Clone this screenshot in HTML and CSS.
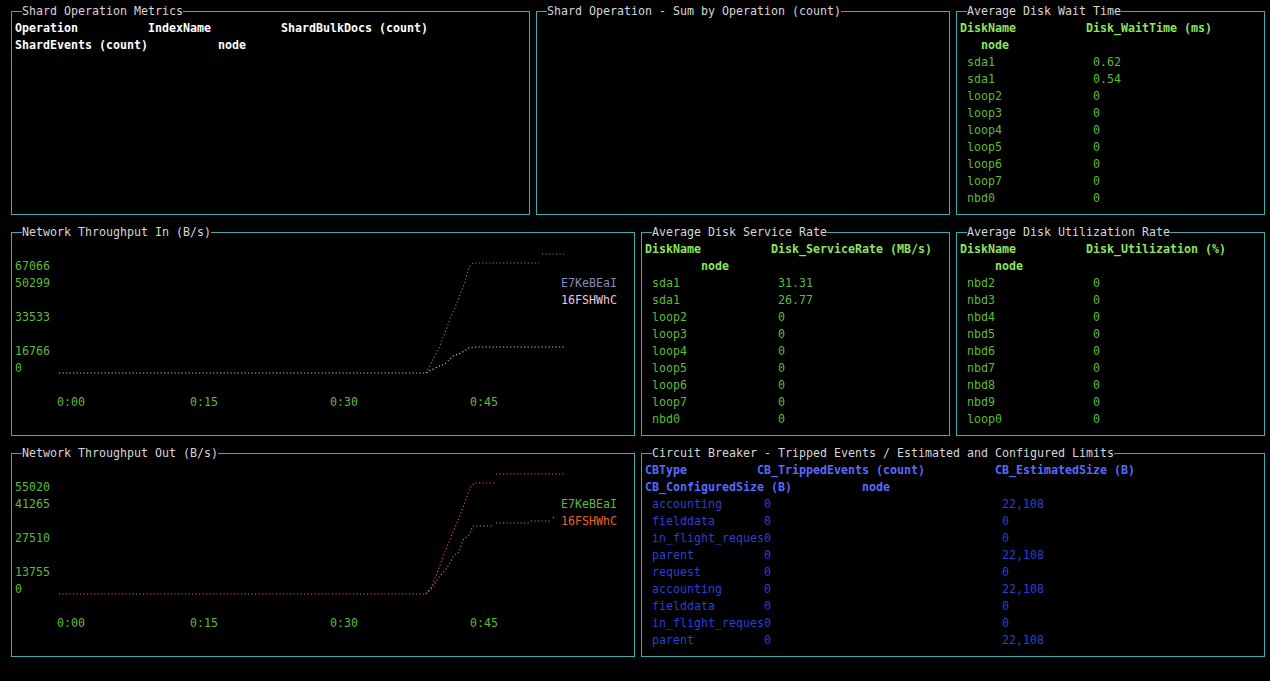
FILE: index.html
```html
<!DOCTYPE html>
<html>
<head>
<meta charset="utf-8">
<title>Cluster Dashboard</title>
<link rel="stylesheet" href="styles.css">
</head>
<body>
<main class="dash">
  <div class="row">
    <section class="box w519">
      <div class="title">Shard Operation Metrics</div>
      <div class="ln white bold"><span class="c19">Operation</span><span class="c19">IndexName</span><span>ShardBulkDocs (count)</span></div>
      <div class="ln white bold"><span class="c29">ShardEvents (count)</span><span>node</span></div>
    </section>
    <section class="box w414">
      <div class="title">Shard Operation - Sum by Operation (count)</div>
    </section>
    <section class="box w309">
      <div class="title">Average Disk Wait Time</div>
      <div class="ln ghead"><span class="c18">DiskName</span><span>Disk_WaitTime (ms)</span></div>
      <div class="ln ghead"><span class="c3"></span><span>node</span></div>
      <div class="ln gdata"><span class="name">sda1</span><span>0.62</span></div>
      <div class="ln gdata"><span class="name">sda1</span><span>0.54</span></div>
      <div class="ln gdata"><span class="name">loop2</span><span>0</span></div>
      <div class="ln gdata"><span class="name">loop3</span><span>0</span></div>
      <div class="ln gdata"><span class="name">loop4</span><span>0</span></div>
      <div class="ln gdata"><span class="name">loop5</span><span>0</span></div>
      <div class="ln gdata"><span class="name">loop6</span><span>0</span></div>
      <div class="ln gdata"><span class="name">loop7</span><span>0</span></div>
      <div class="ln gdata"><span class="name">nbd0</span><span>0</span></div>
    </section>
  </div>

  <div class="row">
    <section class="box w624 chart">
      <div class="title">Network Throughput In (B/s)</div>
      <div class="ln"></div>
      <div class="ln axis">67066</div>
      <div class="ln axis">50299</div>
      <div class="ln axis"></div>
      <div class="ln axis">33533</div>
      <div class="ln axis"></div>
      <div class="ln axis">16766</div>
      <div class="ln axis">0</div>
      <div class="ln"></div>
      <div class="ln axis"><span class="c6"></span><span class="c19">0:00</span><span class="c20">0:15</span><span class="c20">0:30</span><span>0:45</span></div>
      <div class="legend">
        <div class="ln lav">E7KeBEaI</div>
        <div class="ln pink">16FSHWhC</div>
      </div>
      <svg class="plot" width="624" height="204" viewBox="0 0 624 204">
        <polyline class="series lav-s" points="415,141 428,116 440,85 448,66 454,50 458,35 462,31 528,31"/>
        <polyline class="series lav-s" points="531,22 554,22"/>
        <polyline class="series pink-s" points="48,141 415,141 426,135 434,132 442,124 450,121 458,116 463,115 554,115"/>
      </svg>
    </section>
    <section class="box w309">
      <div class="title">Average Disk Service Rate</div>
      <div class="ln ghead"><span class="c18">DiskName</span><span>Disk_ServiceRate (MB/s)</span></div>
      <div class="ln ghead"><span class="c8"></span><span>node</span></div>
      <div class="ln gdata"><span class="name">sda1</span><span>31.31</span></div>
      <div class="ln gdata"><span class="name">sda1</span><span>26.77</span></div>
      <div class="ln gdata"><span class="name">loop2</span><span>0</span></div>
      <div class="ln gdata"><span class="name">loop3</span><span>0</span></div>
      <div class="ln gdata"><span class="name">loop4</span><span>0</span></div>
      <div class="ln gdata"><span class="name">loop5</span><span>0</span></div>
      <div class="ln gdata"><span class="name">loop6</span><span>0</span></div>
      <div class="ln gdata"><span class="name">loop7</span><span>0</span></div>
      <div class="ln gdata"><span class="name">nbd0</span><span>0</span></div>
    </section>
    <section class="box w309">
      <div class="title">Average Disk Utilization Rate</div>
      <div class="ln ghead"><span class="c18">DiskName</span><span>Disk_Utilization (%)</span></div>
      <div class="ln ghead"><span class="c5"></span><span>node</span></div>
      <div class="ln gdata"><span class="name">nbd2</span><span>0</span></div>
      <div class="ln gdata"><span class="name">nbd3</span><span>0</span></div>
      <div class="ln gdata"><span class="name">nbd4</span><span>0</span></div>
      <div class="ln gdata"><span class="name">nbd5</span><span>0</span></div>
      <div class="ln gdata"><span class="name">nbd6</span><span>0</span></div>
      <div class="ln gdata"><span class="name">nbd7</span><span>0</span></div>
      <div class="ln gdata"><span class="name">nbd8</span><span>0</span></div>
      <div class="ln gdata"><span class="name">nbd9</span><span>0</span></div>
      <div class="ln gdata"><span class="name">loop0</span><span>0</span></div>
    </section>
  </div>

  <div class="row">
    <section class="box w624 chart">
      <div class="title">Network Throughput Out (B/s)</div>
      <div class="ln"></div>
      <div class="ln axis">55020</div>
      <div class="ln axis">41265</div>
      <div class="ln axis"></div>
      <div class="ln axis">27510</div>
      <div class="ln axis"></div>
      <div class="ln axis">13755</div>
      <div class="ln axis">0</div>
      <div class="ln"></div>
      <div class="ln axis"><span class="c6"></span><span class="c19">0:00</span><span class="c20">0:15</span><span class="c20">0:30</span><span>0:45</span></div>
      <div class="legend">
        <div class="ln grn">E7KeBEaI</div>
        <div class="ln org">16FSHWhC</div>
      </div>
      <svg class="plot" width="624" height="204" viewBox="0 0 624 204">
        <polyline class="series grn-s" points="415,141 422,134 428,124 436,115 442,104 448,99 452,87 458,82 462,73 483,73"/>
        <polyline class="series grn-s" points="485,70 518,70"/>
        <polyline class="series grn-s" points="520,68 540,68"/>
        <polyline class="series grn-s" points="542,65 543,64"/>
        <polyline class="series org-s" points="48,141 415,141 421,133 426,120 432,104 440,84 448,65 454,49 459,35 463,30 484,30"/>
        <polyline class="series org-s" points="485,21 554,21"/>
      </svg>
    </section>
    <section class="box w624">
      <div class="title">Circuit Breaker - Tripped Events / Estimated and Configured Limits</div>
      <div class="ln bhead"><span class="c16">CBType</span><span class="c34">CB_TrippedEvents (count)</span><span>CB_EstimatedSize (B)</span></div>
      <div class="ln bhead"><span class="c31">CB_ConfiguredSize (B)</span><span>node</span></div>
      <div class="ln bdata"><span class="cbname">accounting</span><span class="c34">0</span><span>22,108</span></div>
      <div class="ln bdata"><span class="cbname">fielddata</span><span class="c34">0</span><span>0</span></div>
      <div class="ln bdata"><span class="cbname">in_flight_reques</span><span class="c34">0</span><span>0</span></div>
      <div class="ln bdata"><span class="cbname">parent</span><span class="c34">0</span><span>22,108</span></div>
      <div class="ln bdata"><span class="cbname">request</span><span class="c34">0</span><span>0</span></div>
      <div class="ln bdata"><span class="cbname">accounting</span><span class="c34">0</span><span>22,108</span></div>
      <div class="ln bdata"><span class="cbname">fielddata</span><span class="c34">0</span><span>0</span></div>
      <div class="ln bdata"><span class="cbname">in_flight_reques</span><span class="c34">0</span><span>0</span></div>
      <div class="ln bdata"><span class="cbname">parent</span><span class="c34">0</span><span>22,108</span></div>
    </section>
  </div>
</main>
</body>
</html>
```
FILE: styles.css
```css
html, body {
  margin: 0;
  padding: 0;
  background: #000;
}
body {
  width: 1270px;
  height: 681px;
  overflow: hidden;
  font-family: "DejaVu Sans Mono", "Liberation Mono", monospace;
  font-size: 11.63px;
  color: #d6d6d6;
}
.dash {
  display: flex;
  flex-direction: column;
  gap: 17px;
  padding: 11px 0 0 11px;
}
.row {
  display: flex;
  gap: 6px;
}
.box {
  position: relative;
  box-sizing: border-box;
  height: 204px;
  border: 1px solid #39adb0;
  padding: 0 3px;
}
.w519 { width: 519px; }
.w414 { width: 414px; }
.w309 { width: 309px; }
.w624 { width: 624px; }

.title {
  width: max-content;
  height: 17px;
  line-height: 17px;
  margin: -9px 0 0 1ch;
  background: #000;
  color: #d6d6d6;
  white-space: pre;
}
.ln {
  height: 17px;
  line-height: 17px;
  white-space: pre;
}
.ln span {
  display: inline-block;
  white-space: pre;
}
.c3 { width: 3ch; }
.c5 { width: 5ch; }
.c6 { width: 6ch; }
.c8 { width: 8ch; }
.c16 { width: 16ch; }
.c18 { width: 18ch; }
.c19 { width: 19ch; }
.c20 { width: 20ch; }
.c29 { width: 29ch; }
.c31 { width: 31ch; }
.c34 { width: 34ch; }

.bold { font-weight: bold; }
.white { color: #ffffff; }

.ghead { color: #8ee45c; font-weight: bold; }
.gdata { color: #5fba36; }
.gdata .name {
  box-sizing: border-box;
  width: 19ch;
  padding-left: 1ch;
}

.bhead { color: #5a6aff; font-weight: bold; }
.bdata { color: #2b3fd4; }
.bdata .cbname {
  box-sizing: border-box;
  width: 17ch;
  padding-left: 1ch;
}

.axis { color: #5fba36; }

.legend {
  position: absolute;
  left: calc(3px + 78ch);
  top: 42px;
}
.lav { color: #8a88b3; }
.pink { color: #f2c3dc; }
.grn { color: #5fba36; }
.org { color: #e8632b; }

.plot {
  position: absolute;
  left: -1px;
  top: -1px;
  pointer-events: none;
}
.series {
  fill: none;
  stroke-width: 1.1;
  stroke-dasharray: 1.2 2.3;
}
.lav-s { stroke: #7d7ba8; }
.pink-s { stroke: #e9bcd3; }
.grn-s { stroke: #5fba36; }
.org-s { stroke: #e0602a; }
```
